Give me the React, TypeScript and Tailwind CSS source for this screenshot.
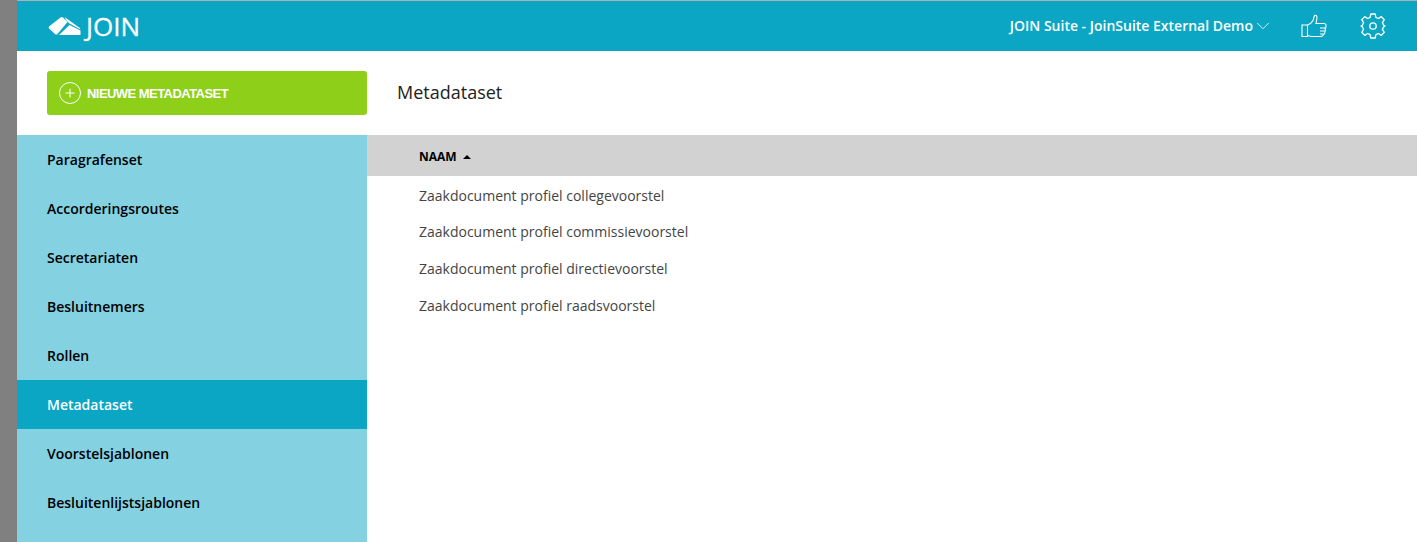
import { ChevronDown, Plus } from 'lucide-react'

const NAV_ITEMS = [
  'Paragrafenset',
  'Accorderingsroutes',
  'Secretariaten',
  'Besluitnemers',
  'Rollen',
  'Metadataset',
  'Voorstelsjablonen',
  'Besluitenlijstsjablonen',
]

const ROWS = [
  'Zaakdocument profiel collegevoorstel',
  'Zaakdocument profiel commissievoorstel',
  'Zaakdocument profiel directievoorstel',
  'Zaakdocument profiel raadsvoorstel',
]

function Logo() {
  return (
    <svg width="33" height="20" viewBox="0 0 33 20" fill="#fff">
      <path d="M1 10.5 L12.5 1.5 Q14 0.5 15 1.5 L19.5 6 L9.5 18 Q8.5 19.2 7 18 L1 12.5 Q0.3 11.3 1 10.5 Z" />
      <path d="M16.5 1 L32.5 12.5 L31.5 13 L21.5 7.5 L18.5 4.5 Z" />
      <path d="M21.5 9 L32.5 14.5 L32.5 19 L11 19 Z" />
    </svg>
  )
}

function ThumbIcon() {
  return (
    <svg width="26" height="24" viewBox="0 0 26 24" fill="none" stroke="#fff" strokeWidth="1.1">
      <path d="M1 11 H6.5 V22.5 H1 Z" />
      <path d="M6.5 11 Q10 10 12 6.5 L13.5 1.5 Q16 0.5 16 4 L15 9.5 H23 Q25.5 10 25 12 Q25 14 24 14.5 Q25 16 24 17.5 Q24 20 22.5 20.5 Q21.5 22.5 20 22.5 H10 L6.5 21.5" />
      <path d="M19 14 H24.5 M19 17 H24 M19 20 H22.5" />
    </svg>
  )
}

function GearIcon() {
  return (
    <svg width="26" height="26" viewBox="0 0 26 26" fill="none" stroke="#fff" strokeWidth="1.3" strokeLinejoin="round">
      <path d="M10.8 1 H15.2 L15.9 4.4 L18.4 5.5 L21.3 3.6 L24.3 6.7 L22.4 9.6 L23.5 12.1 L25 13 L23.5 13.9 L22.4 16.4 L24.3 19.3 L21.3 22.4 L18.4 20.5 L15.9 21.6 L15.2 25 H10.8 L10.1 21.6 L7.6 20.5 L4.7 22.4 L1.7 19.3 L3.6 16.4 L2.5 13.9 L1 13 L2.5 12.1 L3.6 9.6 L1.7 6.7 L4.7 3.6 L7.6 5.5 L10.1 4.4 Z" />
      <circle cx="13" cy="13" r="3.2" />
    </svg>
  )
}

export default function App() {
  return (
    <div className="flex h-[542px] overflow-hidden bg-white font-['Open_Sans',sans-serif]">
      <div className="w-[17px] shrink-0 bg-[#808080]" />

      <div className="flex min-w-0 flex-1 flex-col">
        {/* Top bar */}
        <header className="flex h-[51px] shrink-0 items-center border-t border-[#b0b0b0] bg-[#0aa6c4] pl-[31px] text-white">
          <Logo />
          <span className="ml-[5px] text-[26px] leading-none [-webkit-text-stroke:0.3px_#fff]">JOIN</span>
          <span className="ml-auto translate-x-[2px] text-sm font-semibold">JOIN Suite - JoinSuite External Demo</span>
          <ChevronDown className="ml-[1px]" size={22} strokeWidth={0.9} />
          <div className="ml-[27px]">
            <ThumbIcon />
          </div>
          <div className="ml-[33px] mr-[31px]">
            <GearIcon />
          </div>
        </header>

        <div className="flex min-h-0 flex-1">
          {/* Sidebar */}
          <aside className="w-[350px] shrink-0">
            <div className="flex h-[84px] items-center pl-[30px]">
              <button className="flex h-11 w-80 shrink-0 items-center rounded-[3px] bg-[#8ecf1a] pl-3 text-white">
                <span className="flex h-[22px] w-[22px] items-center justify-center rounded-full border-[1.5px] border-white">
                  <Plus size={14} strokeWidth={1.8} />
                </span>
                <span className="ml-[6px] translate-y-[1px] font-['Liberation_Sans',sans-serif] text-[13px] font-bold tracking-[-0.55px]">
                  NIEUWE METADATASET
                </span>
              </button>
            </div>
            <nav className="bg-[#84d1e2] pb-[15px]">
              {NAV_ITEMS.map(item => (
                <div
                  key={item}
                  className={`flex h-[49px] items-center px-[30px] text-sm font-semibold ${
                    item === 'Metadataset' ? 'bg-[#0aa6c4] text-white' : 'text-black'
                  }`}
                >
                  {item}
                </div>
              ))}
            </nav>
          </aside>

          {/* Content */}
          <main className="min-w-0 flex-1">
            <div className="flex h-[82px] items-center pl-[30px]">
              <h1 className="text-lg text-[#222]">Metadataset</h1>
            </div>
            <div className="mt-[2px] flex h-[41px] items-center bg-[#d2d2d2] pl-[52px] pt-[2px]">
              <span className="text-xs font-bold text-black">NAAM</span>
              <span className="ml-[6px] h-0 w-0 border-x-[4px] border-b-[4px] border-x-transparent border-b-black" />
            </div>
            <ul className="pt-[1.5px]">
              {ROWS.map(row => (
                <li key={row} className="flex h-[36.67px] items-center pl-[52px] text-sm text-[#444]">
                  {row}
                </li>
              ))}
            </ul>
          </main>
        </div>
      </div>
    </div>
  )
}
